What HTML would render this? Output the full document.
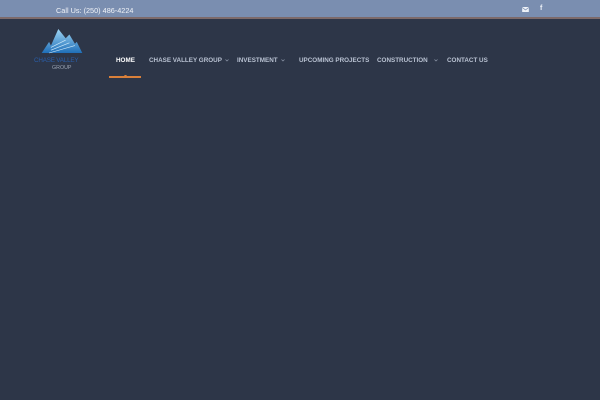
<!DOCTYPE html>
<html><head><meta charset="utf-8"><style>
*{margin:0;padding:0;box-sizing:border-box}
body{width:600px;height:400px;background:#2d3648;font-family:"Liberation Sans",sans-serif;overflow:hidden;position:relative}
.top{position:absolute;left:0;top:0;width:600px;height:19px;background:#7a8eb0;border-bottom:2px solid #7d6a6a}
.call{position:absolute;left:56px;top:5.5px;font-size:7.3px;color:#f0f3f8}
.nav span{position:absolute;top:57px;font-size:6.3px;font-weight:bold;color:#b9c2d2;white-space:nowrap}
.nav svg{position:absolute;top:59px}
.ul{position:absolute;left:109px;top:76px;width:32px;height:1.5px;background:#d9803a}
.dot{position:absolute;left:124px;top:74.5px;width:3px;height:3px;border-radius:50%;background:#d9803a}
</style></head><body>
<div class="top"><div class="call">Call Us: (250) 486-4224</div>
<svg style="position:absolute;left:522px;top:7px" width="7" height="5" viewBox="0 0 8 6"><rect width="8" height="6" fill="#eef2f8"/><path d="M0 0.5L4 3.5L8 0.5" stroke="#7a8eb0" stroke-width="0.8" fill="none"/></svg>
<div style="position:absolute;left:540px;top:5px;font-size:7px;color:#eef2f8;font-weight:bold">f</div>
</div>
<svg style="position:absolute;left:38px;top:27px" width="48" height="28" viewBox="0 0 52 30">
<defs><linearGradient id="g" x1="0" y1="0" x2="0" y2="1"><stop offset="0" stop-color="#9fd6f4"/><stop offset="1" stop-color="#1f6fb8"/></linearGradient></defs>
<polygon points="4,28 12,16 14,20 22,2 30,12 34,8 40,18 42,16 48,28" fill="url(#g)"/>
<path d="M14,22 L30,14 M14,25 L34,17 M12,28 L40,20" stroke="#cfeafa" stroke-width="0.7"/>
</svg>
<div style="position:absolute;left:34px;top:57px;font-size:6.3px;color:#2a5ea8;letter-spacing:-0.2px">CHASE VALLEY</div>
<div style="position:absolute;left:52px;top:65px;font-size:5.3px;color:#9aa3b2">GROUP</div>
<div class="nav">
<span style="left:116px;color:#fff">HOME</span>
<span style="left:149px">CHASE VALLEY GROUP</span><svg style="left:225px" width="4" height="3" viewBox="0 0 4 3"><path d="M0.5 0.5L2 2L3.5 0.5" stroke="#8f99ab" stroke-width="0.7" fill="none"/></svg>
<span style="left:237px">INVESTMENT</span><svg style="left:281px" width="4" height="3" viewBox="0 0 4 3"><path d="M0.5 0.5L2 2L3.5 0.5" stroke="#8f99ab" stroke-width="0.7" fill="none"/></svg>
<span style="left:299px">UPCOMING PROJECTS</span>
<span style="left:377px">CONSTRUCTION</span><svg style="left:434px" width="4" height="3" viewBox="0 0 4 3"><path d="M0.5 0.5L2 2L3.5 0.5" stroke="#8f99ab" stroke-width="0.7" fill="none"/></svg>
<span style="left:447px">CONTACT US</span>
</div>
<div class="ul"></div><div class="dot"></div>
</body></html>
